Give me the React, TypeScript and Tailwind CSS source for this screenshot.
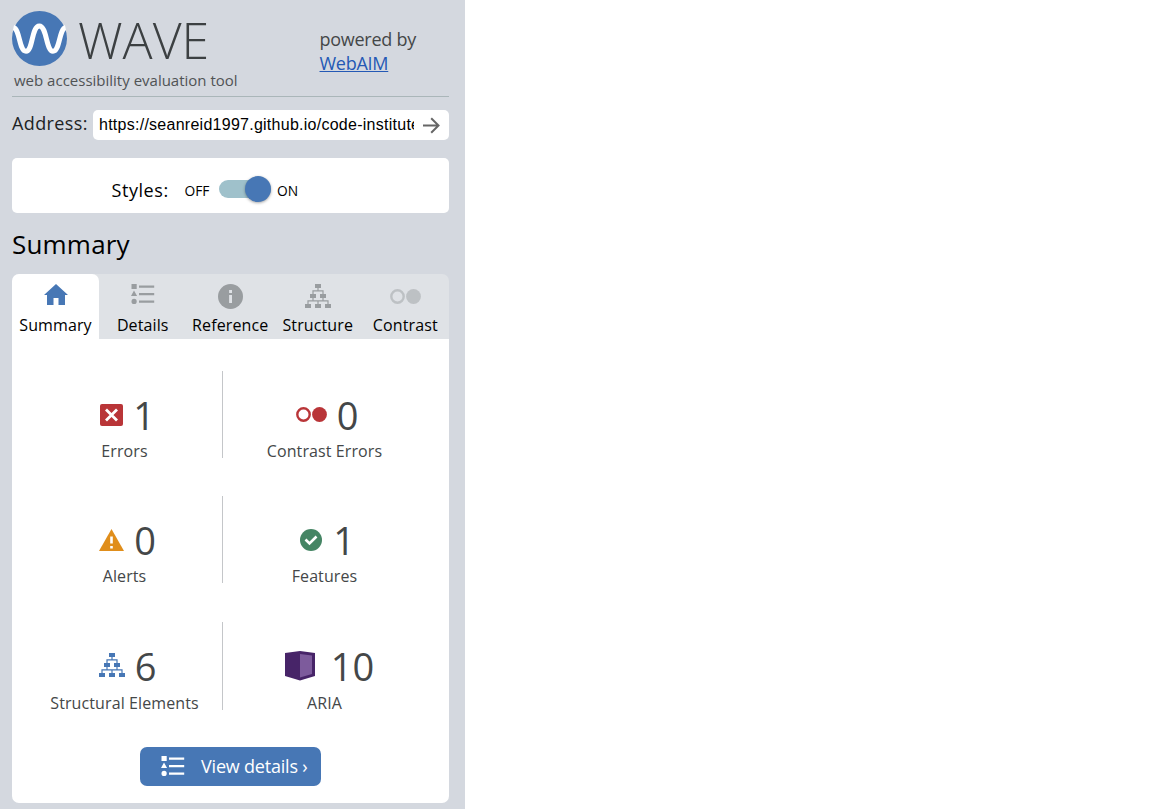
import type { ReactNode } from "react";

function ListIcon({ className }: { className: string }) {
  return (
    <svg width="24" height="22" viewBox="0 0 24 22" fill="currentColor" className={className}>
      <path d="M.5 1h5.2v5H.5zM3 7.6 6.1 13H0z" />
      <circle cx="3.1" cy="18.4" r="2.6" />
      <path d="M8 2.4h15.2v2.3H8zM8 9.9h15.2v2.3H8zM8 17.4h15.2v2.3H8z" />
    </svg>
  );
}

function TreeIcon({ className }: { className: string }) {
  return (
    <svg width="26" height="25" viewBox="0 0 26 25" fill="currentColor" className={className}>
      <path d="M10 0h6v4h-6zM5 10h6v4H5zM15 10h6v4h-6zM0 20h6v4H0zM10 20h6v4h-6zM20 20h6v4h-6z" />
      <path d="M8 10V6.8h10V10M13 4v2.8M3 20v-3.2h20V20M8 14v2.8M18 14v2.8M13 16.8V20" fill="none" stroke="currentColor" strokeWidth="1.2" />
    </svg>
  );
}

function ContrastIcon({ className }: { className: string }) {
  return (
    <svg width="31" height="15" viewBox="0 0 31 15" className={className}>
      <circle cx="7.5" cy="7.5" r="6.2" fill="none" stroke="currentColor" strokeWidth="2.4" />
      <circle cx="23.5" cy="7.5" r="7.4" fill="currentColor" />
    </svg>
  );
}

function Tab({ icon, label, active = false }: { icon: ReactNode; label: string; active?: boolean }) {
  return (
    <div className={active ? "flex w-[87px] flex-col items-center rounded-t-[7px] bg-white" : "flex w-[87.5px] flex-col items-center"}>
      <div className="flex h-[41px] w-full justify-center">{icon}</div>
      <div className="whitespace-nowrap text-[16px] leading-5 tracking-[0.12px]">{label}</div>
    </div>
  );
}

function Stat({ icon, value, label, divider = false, gap, last = false }: { icon: ReactNode; value: string; label: string; divider?: boolean; gap: string; last?: boolean }) {
  return (
    <div className={`flex flex-col items-center ${last ? "h-[88px]" : "h-[87px]"} ${divider ? "border-r border-[#c4c6c9]" : ""}`}>
      <div className={`flex shrink-0 items-center pt-[18px] ${last ? "h-[71px] pb-px" : "h-[70px] pb-px"} ${gap}`}>
        {icon}
        <span className="text-[38px] leading-[50px]">{value}</span>
      </div>
      <div className="pt-[2px] pl-px text-[16px] leading-4 tracking-[0.1px] whitespace-nowrap">{label}</div>
    </div>
  );
}

export default function App() {
  return (
    <div className="h-[809px] w-full overflow-hidden bg-white font-['Open_Sans',sans-serif] text-black">
      <aside className="h-full w-[465px] bg-[#d4d8df] pr-4 pl-3">
        <header className="flex h-[97px] border-b border-[#aab6b9]">
          <div className="w-[307.5px] pt-[11px]">
            <div className="flex h-[57px]">
              <svg width="55" height="55" viewBox="0 0 55 55">
                <circle cx="27.5" cy="27.5" r="27.5" fill="#4777b5" />
                <path d="M1.5 16.5C8 18 7 40.3 14 40.3C21 40.3 19.5 15 27.3 15C35 15 34 40.3 41 40.3C48 40.3 47 18 53.5 16.5" fill="none" stroke="#fff" strokeWidth="5" />
              </svg>
              <div className="ml-[11px] text-[50px] leading-[58px] font-light text-[#3c4042]">WAVE</div>
            </div>
            <div className="ml-[2px] pt-[2px] text-[15px] leading-5 whitespace-nowrap text-[#505355]">web accessibility evaluation tool</div>
          </div>
          <div className="pt-[27px] text-[18px] leading-6 tracking-[-0.26px] text-[#444748]">
            <div>powered by</div>
            <a className="text-[#2459b5] underline">WebAIM</a>
          </div>
        </header>

        <div className="mt-[13px] flex h-[30px]">
          <label className="w-[81px] text-[18px] leading-[26px] tracking-[0.4px] text-[#202224]">Address:</label>
          <div className="flex flex-1 items-center rounded-[5px] bg-white pl-[6px]">
            <div className="w-[315px] overflow-hidden font-['Liberation_Sans',sans-serif] text-[16px] leading-5 tracking-[0.26px] whitespace-nowrap">https://seanreid1997.github.io/code-institute</div>
            <svg width="17" height="17" viewBox="0 0 17 17" className="ml-[9px]" fill="none" stroke="#666" strokeWidth="2">
              <path d="M0 8.5h15M8.2 1.2l7.3 7.3-7.3 7.3" />
            </svg>
          </div>
        </div>

        <div className="mt-[18px] flex h-[55px] items-center rounded-[5px] bg-white pt-[9px] pl-[99.5px]">
          <span className="w-[73px] text-[18px] leading-6 tracking-[0.56px]">Styles:</span>
          <span className="w-[34.5px] pt-px text-[13.8px] leading-6">OFF</span>
          <div className="-mt-[2px] flex h-[18px] w-[52px] items-center justify-end rounded-full bg-[#9fc1cb]">
            <div className="h-[26px] w-[26px] shrink-0 rounded-full bg-[#4777b5] shadow-[0_1px_3px_rgba(0,0,0,0.35)]" />
          </div>
          <span className="ml-[6px] pt-px text-[13.8px] leading-6">ON</span>
        </div>

        <h1 className="pt-[13px] text-[26px] leading-[36px] tracking-[0.2px]">Summary</h1>

        <nav className="mt-[12px] flex h-[65px] rounded-t-[7px] bg-[#dfe2e6]">
          <Tab active label="Summary" icon={<svg width="24" height="21" viewBox="0 0 24 21" className="mt-[10px]" fill="#4777b5"><path d="M12 0 0 11h3v10h6.5v-7h5v7H21V11h3z" /></svg>} />
          <Tab label="Details" icon={<ListIcon className="mt-[9px] text-[#999da0]" />} />
          <Tab label="Reference" icon={<svg width="25" height="25" viewBox="0 0 25 25" className="mt-[10px]"><circle cx="12.5" cy="12.5" r="12.5" fill="#999da0" /><path d="M11.1 6h2.9v2.9h-2.9zM11.1 11h2.9v8h-2.9z" fill="#dfe2e6" /></svg>} />
          <Tab label="Structure" icon={<TreeIcon className="mt-[10px] text-[#999da0]" />} />
          <Tab label="Contrast" icon={<ContrastIcon className="mt-[15px] text-[#bdc1c4]" />} />
        </nav>

        <main className="h-[464px] rounded-b-[7px] bg-white pt-8">
          <div className="grid grid-cols-[197px_202px] pl-[14px] text-[#444748] [grid-template-rows:125px_126px_88px]">
            <Stat divider gap="gap-[10px] pl-[7px]" value="1" label="Errors" icon={<svg width="23" height="22" viewBox="0 0 23 22"><rect width="23" height="22" rx="2" fill="#b93538" /><path d="m6 5.5 11 11m0-11-11 11" stroke="#fff" strokeWidth="2.8" /></svg>} />
            <Stat gap="gap-[10px] pl-[6px]" value="0" label="Contrast Errors" icon={<ContrastIcon className="mb-px text-[#b93538]" />} />
            <Stat divider gap="gap-[10px] pl-[7px]" value="0" label="Alerts" icon={<svg width="25" height="22" viewBox="0 0 25 22"><path d="M12.5 0 25 22H0z" fill="#e08e1b" /><path d="M11.2 7.5h2.6v7h-2.6zM11.2 17h2.6v2.5h-2.6z" fill="#fff" /></svg>} />
            <Stat gap="gap-[11px] pl-[7px]" value="1" label="Features" icon={<svg width="22" height="22" viewBox="0 0 22 22"><circle cx="11" cy="11" r="11" fill="#458564" /><path d="m5.5 10.5 4 4 7-7" fill="none" stroke="#fff" strokeWidth="2.6" /></svg>} />
            <Stat divider last gap="gap-[10px] pl-[7px]" value="6" label="Structural Elements" icon={<TreeIcon className="mb-px text-[#4777b5]" />} />
            <Stat last gap="gap-[16px] pl-[11px]" value="10" label="ARIA" icon={<svg width="30" height="30" viewBox="0 0 30 30" className="mb-px"><path d="m0 2 15-2 15 2v23l-15 4.5L0 25z" fill="#472468" /><path d="m15 3 12 1.5v18.5L15 26.5z" fill="#7d5b9c" /></svg>} />
          </div>
          <button className="mt-[37px] ml-[128px] flex h-[39px] w-[181px] items-center rounded-[7px] bg-[#4777b5] pl-[21px] text-[18px] leading-6 tracking-[-0.2px] whitespace-nowrap text-white">
            <ListIcon className="mr-4 -mt-px" />
            <span className="-mt-px">View details ›</span>
          </button>
        </main>
      </aside>
    </div>
  );
}
